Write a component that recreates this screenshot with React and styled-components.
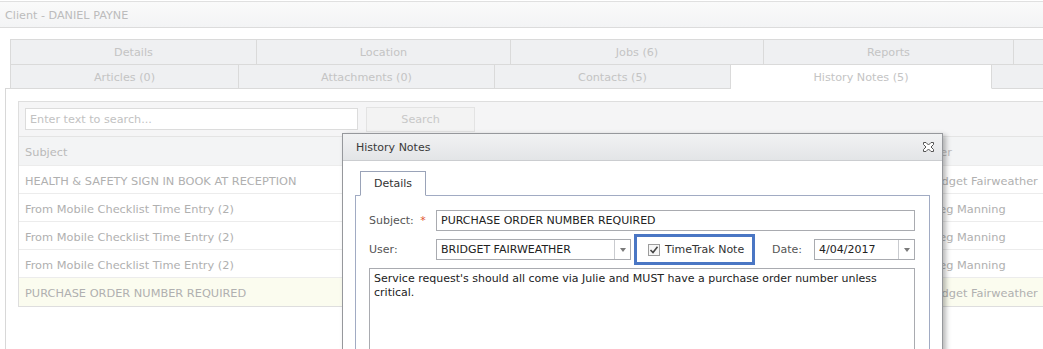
import React from "react";
import styled, { createGlobalStyle } from "styled-components";

const GlobalStyle = createGlobalStyle`
  body {
    margin: 0;
    background: #fff;
    font-family: "DejaVu Sans", Verdana, sans-serif;
    overflow: hidden;
  }
`;

const topTabs = [
  { label: "Details", w: 246 },
  { label: "Location", w: 254 },
  { label: "Jobs (6)", w: 253 },
  { label: "Reports", w: 250 },
  { label: "", w: 80 },
];

const bottomTabs = [
  { label: "Articles (0)", w: 228 },
  { label: "Attachments (0)", w: 256 },
  { label: "Contacts (5)", w: 236 },
  { label: "History Notes (5)", w: 261, active: true },
  { label: "", w: 80 },
];

const notes = [
  { subject: "HEALTH & SAFETY SIGN IN BOOK AT RECEPTION", user: "Bridget Fairweather" },
  { subject: "From Mobile Checklist Time Entry (2)", user: "Greg Manning" },
  { subject: "From Mobile Checklist Time Entry (2)", user: "Greg Manning" },
  { subject: "From Mobile Checklist Time Entry (2)", user: "Greg Manning" },
  { subject: "PURCHASE ORDER NUMBER REQUIRED", user: "Bridget Fairweather", focused: true },
];

const App = () => {
  return (
    <Page>
      <GlobalStyle />
      <TopBar>Client - DANIEL PAYNE</TopBar>

      <TabStrip>
        <TabRow>
          {topTabs.map((t, i) => (
            <PageTab key={i} $w={t.w}>{t.label}</PageTab>
          ))}
        </TabRow>
        <TabRow $second>
          {bottomTabs.map((t, i) => (
            <PageTab key={i} $w={t.w} $active={t.active} $second>
              {t.label}
            </PageTab>
          ))}
        </TabRow>
      </TabStrip>

      <TabPage>
        <Grid>
          <GridToolbar>
            <SearchBox placeholder="Enter text to search..." readOnly />
            <SearchButton>Search</SearchButton>
          </GridToolbar>
          <GridRow $header>
            <Cell>Subject</Cell>
            <Cell>User</Cell>
          </GridRow>
          {notes.map((n, i) => (
            <GridRow key={i} $focused={n.focused}>
              <Cell>{n.subject}</Cell>
              <Cell>{n.user}</Cell>
            </GridRow>
          ))}
        </Grid>
      </TabPage>

      <Dialog>
        <DialogHeader>
          <span>History Notes</span>
          <CloseButton>
            <svg width="13" height="12" viewBox="0 0 13 12">
              <polygon
                points="1.5,1.5 4,1.5 6.5,4 9,1.5 11.5,1.5 11.5,3.5 9,6 11.5,8.5 11.5,10.5 9,10.5 6.5,8 4,10.5 1.5,10.5 1.5,8.5 4,6 1.5,3.5"
                fill="#fff"
                stroke="#555"
                strokeWidth="1"
              />
            </svg>
          </CloseButton>
        </DialogHeader>
        <DialogBody>
          <InnerTabs>
            <InnerTab>Details</InnerTab>
          </InnerTabs>
          <InnerPanel>
            <FormRow>
              <Label>
                Subject: <Required>*</Required>
              </Label>
              <TextBox $w={479}>PURCHASE ORDER NUMBER REQUIRED</TextBox>
            </FormRow>
            <FormRow>
              <Label>User:</Label>
              <Combo $w={195}>
                <ComboText>BRIDGET FAIRWEATHER</ComboText>
                <DropButton>
                  <Arrow />
                </DropButton>
              </Combo>
              <CheckGroup>
                <CheckBox>
                  <svg width="10" height="10" viewBox="0 0 10 10">
                    <path d="M1.5 5 L4 7.5 L8.5 1.8" fill="none" stroke="#444" strokeWidth="1.6" />
                  </svg>
                </CheckBox>
                TimeTrak Note
              </CheckGroup>
              <DateLabel>Date:</DateLabel>
              <Combo $w={101}>
                <ComboText>4/04/2017</ComboText>
                <DropButton>
                  <Arrow />
                </DropButton>
              </Combo>
            </FormRow>
            <Memo>
              Service request's should all come via Julie and MUST have a purchase order number unless
              critical.
            </Memo>
          </InnerPanel>
        </DialogBody>
      </Dialog>
    </Page>
  );
};

export default App;

const Page = styled.div`
  position: relative;
  width: 1043px;
  height: 349px;
  overflow: hidden;
`;

const TopBar = styled.div`
  box-sizing: border-box;
  margin-top: 1px;
  height: 27px;
  border-top: 1px solid #e0e0e0;
  border-bottom: 1px solid #dcdcdc;
  background: linear-gradient(#fafafa, #f3f4f5);
  padding: 1px 0 0 5px;
  display: flex;
  align-items: center;
  font-size: 11.2px;
  color: #bcbcbc;
`;

const TabStrip = styled.div`
  margin: 11px 0 -1px 10px;
  position: relative;
  z-index: 1;
`;

const TabRow = styled.div`
  display: flex;
  border-left: 1px solid #dadada;
  border-top: ${(p) => (p.$second ? "none" : "1px solid #dadada")};
  white-space: nowrap;
`;

const PageTab = styled.div`
  box-sizing: border-box;
  flex: 0 0 ${(p) => p.$w}px;
  height: ${(p) => (p.$second ? 24 : 25)}px;
  padding-top: 1px;
  border-right: 1px solid #dadada;
  border-bottom: 1px solid ${(p) => (p.$active ? "#fff" : "#dadada")};
  background: ${(p) => (p.$active ? "#fff" : "#eff0f2")};
  color: #c4c4c4;
  font-size: 11.2px;
  display: flex;
  align-items: center;
  justify-content: center;
`;

const TabPage = styled.div`
  margin-left: 5px;
  border-left: 1px solid #d8d8d8;
  border-top: 1px solid #d8d8d8;
  padding: 12px 0 0 12px;
  height: 300px;
`;

const Grid = styled.div`
  width: 1100px;
  border: 1px solid #dedede;
  border-right: none;
`;

const GridToolbar = styled.div`
  height: 35px;
  box-sizing: border-box;
  padding-left: 6px;
  display: flex;
  align-items: center;
  gap: 8px;
  background: #f5f5f6;
  border-bottom: 1px solid #e4e4e4;
`;

const SearchBox = styled.input`
  box-sizing: border-box;
  width: 333px;
  height: 22px;
  border: 1px solid #dcdcdc;
  background: #fff;
  padding: 1px 4px 0;
  font-family: "DejaVu Sans", Verdana, sans-serif;
  font-size: 11.2px;
  outline: none;
  &::placeholder {
    color: #c2c2c2;
  }
`;

const SearchButton = styled.div`
  box-sizing: border-box;
  width: 109px;
  height: 25px;
  padding-top: 1px;
  border: 1px solid #e3e3e3;
  background: #f3f3f3;
  color: #c8c8c8;
  font-size: 11.2px;
  display: flex;
  align-items: center;
  justify-content: center;
`;

const GridRow = styled.div`
  display: grid;
  grid-template-columns: 901px 1fr;
  box-sizing: border-box;
  height: ${(p) => (p.$header ? 29 : 28)}px;
  padding-top: 2px;
  border-bottom: 1px solid #ececec;
  background: ${(p) => (p.$header ? "#f3f4f5" : p.$focused ? "#fbfcef" : "#fff")};
  color: ${(p) => (p.$header ? "#bababa" : "#b0b0b0")};
  font-size: 11.35px;
  &:last-child {
    border-bottom: none;
  }
`;

const Cell = styled.div`
  padding-left: 6px;
  display: flex;
  align-items: center;
  white-space: nowrap;
`;

const Dialog = styled.div`
  position: absolute;
  left: 342px;
  top: 133px;
  width: 601px;
  height: 260px;
  box-sizing: border-box;
  border: 1px solid #96989c;
  background: #fff;
  box-shadow: 3px 2px 5px rgba(0, 0, 0, 0.28);
  z-index: 2;
  color: #333;
  font-size: 11px;
`;

const DialogHeader = styled.div`
  box-sizing: border-box;
  height: 27px;
  border-bottom: 1px solid #cbcdd0;
  background: linear-gradient(#f1f2f3, #e3e5e7);
  display: flex;
  align-items: center;
  justify-content: space-between;
  padding: 0 7px 0 13px;
  font-size: 11px;
  color: #3a3a3a;
`;

const CloseButton = styled.div`
  display: flex;
  align-items: center;
`;

const DialogBody = styled.div`
  padding: 10px 12px 0 12px;
`;

const InnerTabs = styled.div`
  display: flex;
  padding-left: 5px;
  margin-bottom: -1px;
  position: relative;
  z-index: 1;
`;

const InnerTab = styled.div`
  box-sizing: border-box;
  width: 66px;
  height: 25px;
  border: 1px solid #9aa3b8;
  border-bottom-color: #fff;
  background: #fff;
  font-size: 11px;
  color: #333;
  display: flex;
  align-items: center;
  justify-content: center;
`;

const InnerPanel = styled.div`
  border: 1px solid #a1abc3;
  padding: 14px 13px 0 13px;
  height: 200px;
  display: flex;
  flex-direction: column;
  gap: 8px;
`;

const FormRow = styled.div`
  display: flex;
  align-items: center;
  height: 21px;
`;

const Label = styled.div`
  width: 67px;
  color: #555;
  font-size: 11px;
  white-space: nowrap;
`;

const Required = styled.span`
  color: #e0552e;
  margin-left: 3px;
`;

const TextBox = styled.div`
  box-sizing: border-box;
  width: ${(p) => p.$w}px;
  height: 21px;
  border: 1px solid #a9abb0;
  padding-left: 4px;
  display: flex;
  align-items: center;
  font-size: 11px;
  color: #222;
`;

const Combo = styled.div`
  box-sizing: border-box;
  width: ${(p) => p.$w}px;
  height: 21px;
  border: 1px solid #a9abb0;
  display: flex;
  font-size: 11px;
  color: #222;
`;

const ComboText = styled.div`
  flex: 1;
  padding-left: 4px;
  display: flex;
  align-items: center;
`;

const DropButton = styled.div`
  width: 15px;
  border-left: 1px solid #c9cbcf;
  display: flex;
  align-items: center;
  justify-content: center;
`;

const Arrow = styled.div`
  width: 0;
  height: 0;
  border-left: 3.5px solid transparent;
  border-right: 3.5px solid transparent;
  border-top: 4px solid #7a7a7a;
`;

const CheckGroup = styled.div`
  box-sizing: border-box;
  width: 121px;
  height: 31px;
  margin: -5px 0 -5px 3px;
  border: 3px solid #4a76c4;
  display: flex;
  align-items: center;
  gap: 5px;
  padding-left: 11px;
  font-size: 11px;
  color: #333;
  white-space: nowrap;
`;

const CheckBox = styled.div`
  box-sizing: border-box;
  width: 12px;
  height: 12px;
  border: 1px solid #9c9c9c;
  background: #f6f6f6;
  display: flex;
  align-items: center;
  justify-content: center;
`;

const DateLabel = styled.div`
  width: 42px;
  margin-left: 17px;
  color: #555;
  font-size: 11px;
`;

const Memo = styled.div`
  box-sizing: border-box;
  width: 546px;
  height: 120px;
  border: 1px solid #a9abb0;
  padding: 3px 4px;
  font-size: 11px;
  line-height: 14px;
  color: #222;
`;
